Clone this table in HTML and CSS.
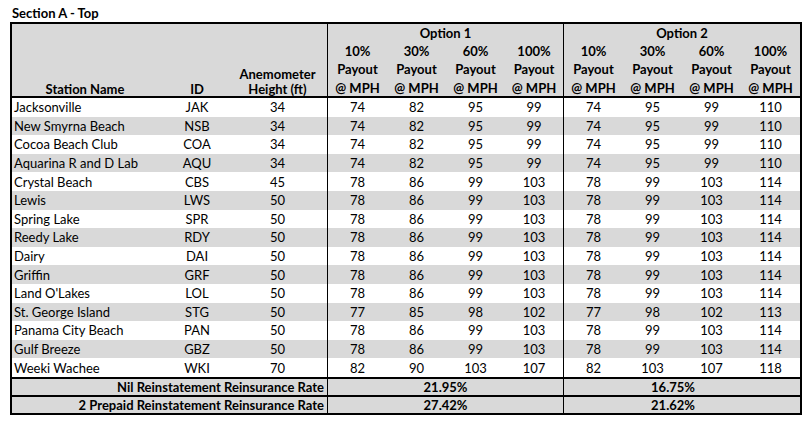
FILE: index.html
```html
<!DOCTYPE html>
<html>
<head>
<meta charset="utf-8">
<link rel="stylesheet" href="styles.css">
</head>
<body>
<div class="title">Section A - Top</div>
<table class="grid">
  <colgroup>
    <col class="c-name"><col class="c-id"><col class="c-anem">
    <col class="c-a"><col class="c-b"><col class="c-b"><col class="c-c">
    <col class="c-a"><col class="c-b"><col class="c-b"><col class="c-b">
  </colgroup>
  <thead>
    <tr class="opt-row">
      <th rowspan="2" class="hname"><div class="hl">Station Name</div></th>
      <th rowspan="2" class="hbot"><div class="hl">ID</div></th>
      <th rowspan="2" class="hbot"><div class="hl">Anemometer<br>Height (ft)</div></th>
      <th colspan="4" class="sep">Option 1</th>
      <th colspan="4" class="sep">Option 2</th>
    </tr>
    <tr class="sub-row">
      <th class="sep"><div class="hl">10%<br>Payout<br>@ MPH</div></th>
      <th><div class="hl">30%<br>Payout<br>@ MPH</div></th>
      <th><div class="hl">60%<br>Payout<br>@ MPH</div></th>
      <th><div class="hl">100%<br>Payout<br>@ MPH</div></th>
      <th class="sep"><div class="hl">10%<br>Payout<br>@ MPH</div></th>
      <th><div class="hl">30%<br>Payout<br>@ MPH</div></th>
      <th><div class="hl">60%<br>Payout<br>@ MPH</div></th>
      <th><div class="hl">100%<br>Payout<br>@ MPH</div></th>
    </tr>
  </thead>
  <tbody>
    <tr><td class="name">Jacksonville</td><td>JAK</td><td>34</td><td class="sep">74</td><td>82</td><td>95</td><td>99</td><td class="sep">74</td><td>95</td><td>99</td><td>110</td></tr>
    <tr><td class="name">New Smyrna Beach</td><td>NSB</td><td>34</td><td class="sep">74</td><td>82</td><td>95</td><td>99</td><td class="sep">74</td><td>95</td><td>99</td><td>110</td></tr>
    <tr><td class="name">Cocoa Beach Club</td><td>COA</td><td>34</td><td class="sep">74</td><td>82</td><td>95</td><td>99</td><td class="sep">74</td><td>95</td><td>99</td><td>110</td></tr>
    <tr><td class="name">Aquarina R and D Lab</td><td>AQU</td><td>34</td><td class="sep">74</td><td>82</td><td>95</td><td>99</td><td class="sep">74</td><td>95</td><td>99</td><td>110</td></tr>
    <tr><td class="name">Crystal Beach</td><td>CBS</td><td>45</td><td class="sep">78</td><td>86</td><td>99</td><td>103</td><td class="sep">78</td><td>99</td><td>103</td><td>114</td></tr>
    <tr><td class="name">Lewis</td><td>LWS</td><td>50</td><td class="sep">78</td><td>86</td><td>99</td><td>103</td><td class="sep">78</td><td>99</td><td>103</td><td>114</td></tr>
    <tr><td class="name">Spring Lake</td><td>SPR</td><td>50</td><td class="sep">78</td><td>86</td><td>99</td><td>103</td><td class="sep">78</td><td>99</td><td>103</td><td>114</td></tr>
    <tr><td class="name">Reedy Lake</td><td>RDY</td><td>50</td><td class="sep">78</td><td>86</td><td>99</td><td>103</td><td class="sep">78</td><td>99</td><td>103</td><td>114</td></tr>
    <tr><td class="name">Dairy</td><td>DAI</td><td>50</td><td class="sep">78</td><td>86</td><td>99</td><td>103</td><td class="sep">78</td><td>99</td><td>103</td><td>114</td></tr>
    <tr><td class="name">Griffin</td><td>GRF</td><td>50</td><td class="sep">78</td><td>86</td><td>99</td><td>103</td><td class="sep">78</td><td>99</td><td>103</td><td>114</td></tr>
    <tr><td class="name">Land O'Lakes</td><td>LOL</td><td>50</td><td class="sep">78</td><td>86</td><td>99</td><td>103</td><td class="sep">78</td><td>99</td><td>103</td><td>114</td></tr>
    <tr><td class="name">St. George Island</td><td>STG</td><td>50</td><td class="sep">77</td><td>85</td><td>98</td><td>102</td><td class="sep">77</td><td>98</td><td>102</td><td>113</td></tr>
    <tr><td class="name">Panama City Beach</td><td>PAN</td><td>50</td><td class="sep">78</td><td>86</td><td>99</td><td>103</td><td class="sep">78</td><td>99</td><td>103</td><td>114</td></tr>
    <tr><td class="name">Gulf Breeze</td><td>GBZ</td><td>50</td><td class="sep">78</td><td>86</td><td>99</td><td>103</td><td class="sep">78</td><td>99</td><td>103</td><td>114</td></tr>
    <tr><td class="name">Weeki Wachee</td><td>WKI</td><td>70</td><td class="sep">82</td><td>90</td><td>103</td><td>107</td><td class="sep">82</td><td>103</td><td>107</td><td>118</td></tr>
  </tbody>
  <tfoot>
    <tr><td colspan="3" class="flabel">Nil Reinstatement Reinsurance Rate</td><td colspan="4" class="sep fval">21.95%</td><td colspan="4" class="sep fval f2">16.75%</td></tr>
    <tr><td colspan="3" class="flabel">2 Prepaid Reinstatement Reinsurance Rate</td><td colspan="4" class="sep fval">27.42%</td><td colspan="4" class="sep fval f2">21.62%</td></tr>
  </tfoot>
</table>
</body>
</html>
```
FILE: styles.css
```css
html, body {
  margin: 0;
  padding: 0;
  background: #fff;
}
body {
  font-family: Lato, "Liberation Sans", sans-serif;
  font-size: 13px;
  color: #000;
}
.title {
  font-weight: bold;
  height: 22px;
  line-height: 26px;
  padding-left: 12px;
  font-size: 13px;
}
.grid {
  margin-left: 10px;
  border: 2px solid #000;
  border-collapse: separate;
  border-spacing: 0;
  table-layout: fixed;
  width: 792px;
}
.c-name { width: 154px; }
.c-id { width: 62px; }
.c-anem { width: 99px; }
.c-a { width: 60px; }
.c-b { width: 59px; }
.c-c { width: 58px; }
th, td {
  box-sizing: border-box;
  padding: 0;
  text-align: center;
  white-space: nowrap;
}
th {
  font-weight: bold;
  background: #d9d9d9;
}
thead tr.opt-row th {
  height: 17px;
  line-height: 15px;
  vertical-align: bottom;
}
thead tr.sub-row th {
  height: 57px;
  line-height: 18.5px;
  vertical-align: bottom;
}
thead th.hname, thead th.hbot {
  vertical-align: bottom;
  line-height: 18.5px;
}
.hl { margin-bottom: -1px; }
thead th.hname { padding-right: 8px; }
thead th.hname, thead th.hbot, thead tr.sub-row th {
  border-bottom: 2px solid #000;
}
.sep { border-left: 1px solid #000; }
tbody td {
  height: 18.6px;
  line-height: 18px;
}
tbody tr:nth-child(even) td { background: #d9d9d9; }
td.name { text-align: left; padding-left: 2px; }
tfoot td {
  background: #d9d9d9;
  font-weight: bold;
  border-top: 2px solid #000;
  height: 18px;
  line-height: 16px;
}
td.flabel { text-align: right; padding-right: 3px; }
td.f2 { padding-right: 18px; }
```
